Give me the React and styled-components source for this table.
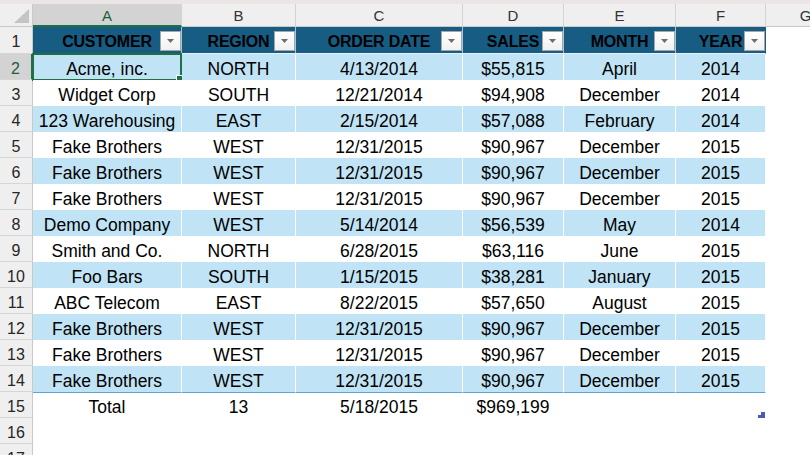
import React from "react";
import styled, { createGlobalStyle } from "styled-components";

const Global = createGlobalStyle`
  html, body { margin: 0; padding: 0; background: #fff; overflow: hidden; }
  body { font-family: "Liberation Sans", Arial, sans-serif; }
`;

const COLS = "33px 149px 114px 167px 101px 112px 90px 80px";
const GREEN = "#1f7145";

const Page = styled.div`
  width: 810px;
  height: 455px;
  overflow: hidden;
  background: #fff;
`;

const TopStrip = styled.div`
  height: 4px;
  background: #ece5e5;
`;

const Row = styled.div`
  display: grid;
  grid-template-columns: ${COLS};
  height: ${(p) => p.$h}px;
  width: 846px;
`;

const Corner = styled.div`
  position: relative;
  background: #efefef;
  border-right: 1px solid #c9c9c9;
  border-bottom: 1px solid #c9c9c9;
  box-sizing: border-box;
  display: flex;
  align-items: flex-end;
  justify-content: flex-end;
  padding: 0 3px 3px 0;
`;

const ColHead = styled.div`
  box-sizing: border-box;
  background: ${(p) => (p.$sel ? "#d3d3d3" : "#efefef")};
  border-right: 1px solid #d3d3d3;
  border-bottom: ${(p) => (p.$sel ? `2px solid ${GREEN}` : "1px solid #c9c9c9")};
  color: ${(p) => (p.$sel ? "#1b5e3a" : "#333")};
  font-size: 15px;
  line-height: 17px;
  padding-top: 3px;
  text-align: center;
`;

const RowHead = styled.div`
  box-sizing: border-box;
  background: ${(p) => (p.$sel ? "#d3d3d3" : "#efefef")};
  border-right: ${(p) => (p.$sel ? `2px solid ${GREEN}` : "1px solid #c9c9c9")};
  border-bottom: 1px solid #d6d6d6;
  color: ${(p) => (p.$sel ? "#1b5e3a" : "#262626")};
  font-size: 16px;
  line-height: 18px;
  padding-top: ${(p) => p.$pt}px;
  text-align: center;
`;

const HeadCell = styled.div`
  position: relative;
  box-sizing: border-box;
  background: #165c83;
  border-right: 1px solid ${(p) => (p.$last ? "#165c83" : "#a9c6d8")};
  border-bottom: 1px solid #e8f3f9;
  color: #000;
  font-weight: 700;
  font-size: 16px;
  letter-spacing: -0.2px;
  line-height: 18px;
  padding-top: 6px;
  text-align: center;
  white-space: nowrap;
`;

const FilterBtn = styled.div`
  position: absolute;
  right: 0;
  top: 4px;
  width: 21px;
  height: 20px;
  box-sizing: border-box;
  border: 1px solid #a6a6a6;
  background: linear-gradient(#ffffff, #f1f1f1);
  display: flex;
  align-items: center;
  justify-content: center;
`;

const Cell = styled.div`
  position: relative;
  box-sizing: border-box;
  background: ${(p) => (p.$band ? "#c0e4f5" : "#fff")};
  border-right: 1px solid #fff;
  border-top: ${(p) => (p.$total ? "1px solid #5aa7d6" : "0")};
  color: #000;
  font-size: 17.5px;
  line-height: 19px;
  padding-top: ${(p) => (p.$total ? 5 : 6)}px;
  text-align: center;
  white-space: nowrap;
`;

const Blank = styled.div`
  background: #fff;
`;

const Selection = styled.div`
  position: absolute;
  left: -1px;
  top: -1px;
  right: -1px;
  bottom: -1px;
  border: 2px solid ${GREEN};
  pointer-events: none;
`;

const Handle = styled.div`
  position: absolute;
  right: -4px;
  bottom: -4px;
  width: 6px;
  height: 6px;
  background: ${GREEN};
  border: 1px solid #fff;
  box-sizing: content-box;
`;

const ResizeMark = styled.svg`
  position: absolute;
  right: 0;
  bottom: 0;
`;

const headers = ["CUSTOMER", "REGION", "ORDER DATE", "SALES", "MONTH", "YEAR"];
const fb = ["Fake Brothers", "WEST", "12/31/2015", "$90,967", "December", "2015"];
const data = [
  ["Acme, inc.", "NORTH", "4/13/2014", "$55,815", "April", "2014"],
  ["Widget Corp", "SOUTH", "12/21/2014", "$94,908", "December", "2014"],
  ["123 Warehousing", "EAST", "2/15/2014", "$57,088", "February", "2014"],
  fb,
  fb,
  fb,
  ["Demo Company", "WEST", "5/14/2014", "$56,539", "May", "2014"],
  ["Smith and Co.", "NORTH", "6/28/2015", "$63,116", "June", "2015"],
  ["Foo Bars", "SOUTH", "1/15/2015", "$38,281", "January", "2015"],
  ["ABC Telecom", "EAST", "8/22/2015", "$57,650", "August", "2015"],
  fb,
  fb,
  fb,
];
const total = ["Total", "13", "5/18/2015", "$969,199", "", ""];

const Arrow = () => (
  <svg width="7" height="4" viewBox="0 0 7 4">
    <path d="M0 0 H7 L3.5 4 Z" fill="#6e6e6e" />
  </svg>
);

export default function App() {
  return (
    <Page>
      <Global />
      <TopStrip />
      <Row $h={23}>
        <Corner>
          <svg width="15" height="14" viewBox="0 0 15 14">
            <path d="M15 0 V14 H0 Z" fill="#c4c4c4" />
          </svg>
        </Corner>
        {["A", "B", "C", "D", "E", "F", "G"].map((l, i) => (
          <ColHead key={l} $sel={i === 0}>
            {l}
          </ColHead>
        ))}
      </Row>
      <Row $h={27}>
        <RowHead $pt={6}>1</RowHead>
        {headers.map((h, i) => (
          <HeadCell key={h} $last={i === 5}>
            {h}
            <FilterBtn>
              <Arrow />
            </FilterBtn>
          </HeadCell>
        ))}
        <Blank />
      </Row>
      {data.map((r, ri) => {
        const n = ri + 2;
        return (
          <Row $h={26} key={n}>
            <RowHead $pt={6} $sel={n === 2}>
              {n}
            </RowHead>
            {r.map((v, ci) => (
              <Cell key={ci} $band={n % 2 === 0}>
                {v}
                {n === 2 && ci === 0 && (
                  <Selection>
                    <Handle />
                  </Selection>
                )}
              </Cell>
            ))}
            <Blank />
          </Row>
        );
      })}
      <Row $h={26}>
        <RowHead $pt={6}>15</RowHead>
        {total.map((v, ci) => (
          <Cell key={ci} $total>
            {v}
            {ci === 5 && (
              <ResizeMark width="7" height="6" viewBox="0 0 7 6">
                <path d="M3 0 H7 V6 H0 V3 H3 Z" fill="#4a5bb5" />
              </ResizeMark>
            )}
          </Cell>
        ))}
        <Blank />
      </Row>
      <Row $h={26}>
        <RowHead $pt={6}>16</RowHead>
      </Row>
      <Row $h={26}>
        <RowHead $pt={6}>17</RowHead>
      </Row>
    </Page>
  );
}
